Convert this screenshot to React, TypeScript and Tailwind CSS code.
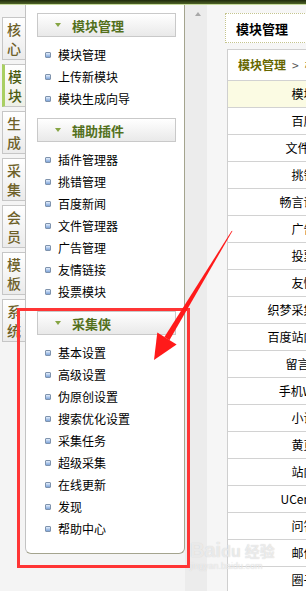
import React from "react";

const tabs = [
  ["核", "心"],
  ["模", "块"],
  ["生", "成"],
  ["采", "集"],
  ["会", "员"],
  ["模", "板"],
  ["系", "统"],
];

const sections = [
  { title: "模块管理", items: ["模块管理", "上传新模块", "模块生成向导"] },
  {
    title: "辅助插件",
    items: ["插件管理器", "挑错管理", "百度新闻", "文件管理器", "广告管理", "友情链接", "投票模块"],
  },
  {
    title: "采集侠",
    items: ["基本设置", "高级设置", "伪原创设置", "搜索优化设置", "采集任务", "超级采集", "在线更新", "发现", "帮助中心"],
  },
];

const modules = [
  "百度新闻",
  "文件管理器",
  "挑错管理",
  "畅言评论系统",
  "广告管理",
  "投票模块",
  "友情链接",
  "织梦采集侠 V2.9.1",
  "百度站内搜索模块",
  "留言簿模块",
  "手机WAP浏览",
  "小说模块",
  "黄页模块",
  "站内新闻",
  "UCenter模块",
  "问答模块",
  "邮件订阅",
  "圈子模块",
];

const Bullet = () => (
  <span className="block w-[6px] h-[6px] rounded-[1px] border border-[#7f93ad] bg-linear-to-b from-[#e4eefb] to-[#7ea4d9]" />
);

const Section = ({ title, items }: { title: string; items: string[] }) => (
  <div className="mb-[8px]">
    <div className="ml-[11px] w-[139px] h-[24px] border border-[#c9c9c9] bg-linear-to-b from-white to-[#e9e9e9] flex items-center pl-[17px]">
      <svg width="6" height="4" viewBox="0 0 6 4">
        <path d="M0 0 L6 0 L3 4 Z" fill="#86a544" />
      </svg>
      <span className="ml-[11px] text-[13px] font-bold text-[#53701c] leading-none">{title}</span>
    </div>
    <div className="pt-[7px]">
      {items.map((item) => (
        <div key={item} className="h-[22px] flex items-center pl-[19px] gap-[7px]">
          <Bullet />
          <span className="text-[12px] text-black leading-none">{item}</span>
        </div>
      ))}
    </div>
  </div>
);

export default function App() {
  return (
    <div className="relative w-[306px] h-[591px] overflow-hidden bg-[#f4f4f4] font-['Noto_Sans_CJK_SC','Liberation_Sans',sans-serif]">
      {/* top bar */}
      <div className="h-[4px] bg-linear-to-b from-[#1f2a0c] to-[#4f6428]" />
      <div className="h-px bg-[#c6da9c]" />

      <div className="flex">
        {/* side tabs */}
        <div className="w-[25px] shrink-0 flex flex-col gap-[4px] pt-[12px] pl-[2px]">
          {tabs.map((t, i) => (
            <div
              key={i}
              className={
                i === 1
                  ? "h-[43px] w-[23px] border border-r-0 border-[#c6c6c6] border-l-[3px] border-l-[#a9cf62] bg-linear-to-b from-white to-[#eef0e6] flex flex-col items-center justify-center text-[14px] font-medium leading-[19px] text-[#4b5c12]"
                  : "h-[43px] w-[23px] border border-r-0 border-[#c6c6c6] bg-linear-to-b from-white to-[#ebebeb] flex flex-col items-center justify-center text-[14px] font-medium leading-[19px] text-[#6e6129]"
              }
            >
              <span>{t[0]}</span>
              <span>{t[1]}</span>
            </div>
          ))}
        </div>

        {/* menu panel */}
        <div className="w-[160px] h-[549px] shrink-0 bg-white border-l border-l-[#c3c3c3] border-r border-r-[#a4a48e] border-b border-b-[#a4a48e] rounded-b-[6px] pt-[8px]">
          {sections.map((s) => (
            <Section key={s.title} title={s.title} items={s.items} />
          ))}
        </div>

        {/* scrollbar */}
        <div className="w-[22px] h-[586px] shrink-0 bg-[#ececec] pt-[7px] pl-[10px]">
          <svg width="6" height="4" viewBox="0 0 6 4">
            <path d="M3 0 L6 4 L0 4 Z" fill="#a8a8a8" />
          </svg>
        </div>

        {/* content */}
        <div className="w-[99px] shrink-0 pt-[8px] pl-[18px] bg-[#f6f6f6] h-[586px]">
          <div className="w-[200px] h-[30px] border border-dotted border-[#c4c48e] bg-white flex items-center pl-[10px]">
            <span className="text-[13px] font-bold text-black leading-none">模块管理</span>
          </div>
          <div className="mt-[6px] ml-[2px] w-[176px] border-l border-t border-[#cfcfcf] bg-white">
            <div className="h-[31px] border-b border-[#d2d2d2] flex items-center pl-[10px] text-[12px] whitespace-nowrap">
              <span className="font-bold text-[#666600]">模块管理</span>
              <span className="text-[#555] mx-[6px]">&gt;</span>
              <span className="text-[#666600]">模块列表</span>
            </div>
            <div className="h-[27px] border-b border-[#d2d2d2] bg-[#fbfbe3] flex items-center justify-center text-[12px] text-black whitespace-nowrap">
              模块名称
            </div>
            {modules.map((m) => (
              <div
                key={m}
                className="h-[27px] border-b border-[#d2d2d2] flex items-center justify-center text-[12px] text-black whitespace-nowrap"
              >
                {m}
              </div>
            ))}
          </div>
        </div>
      </div>

      {/* annotation: red box */}
      <div className="absolute left-[17px] top-[308px] w-[173px] h-[260px] border-[3px] border-[#ff3535] pointer-events-none" />

      {/* annotation: red arrow */}
      <svg className="absolute left-0 top-0 pointer-events-none" width="306" height="591" viewBox="0 0 306 591">
        <polygon points="232.6,230.7 231.4,231.3 164.4,337 169.4,340.2" fill="#ff1a1a" />
        <polygon points="154,360 157.3,332.6 176.6,344.4" fill="#ff1a1a" />
      </svg>

      {/* watermark */}
      <div className="absolute left-[190px] top-[540px] pointer-events-none text-white/60 [text-shadow:0_0_1px_#c8c8c8]">
        <div className="text-[20px] font-bold leading-none font-['Liberation_Sans',sans-serif]">
          Bai<span className="text-[16px]">du</span>
          <span className="text-[15px] ml-[4px] font-['Noto_Sans_CJK_SC',sans-serif]">经验</span>
        </div>
        <div className="text-[9px] leading-none mt-[2px] font-['Liberation_Sans',sans-serif]">jingyan.baidu.com</div>
      </div>
    </div>
  );
}
